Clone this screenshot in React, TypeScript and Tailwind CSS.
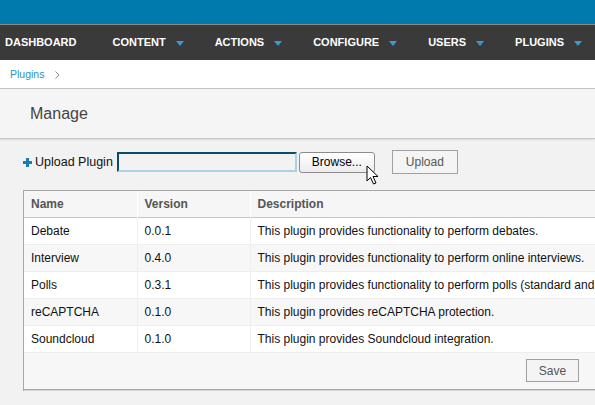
import React from "react";

const navItems = [
  { label: "DASHBOARD", caret: false },
  { label: "CONTENT", caret: true },
  { label: "ACTIONS", caret: true },
  { label: "CONFIGURE", caret: true },
  { label: "USERS", caret: true },
  { label: "PLUGINS", caret: true },
];

const plugins = [
  { name: "Debate", version: "0.0.1", description: "This plugin provides functionality to perform debates." },
  { name: "Interview", version: "0.4.0", description: "This plugin provides functionality to perform online interviews." },
  { name: "Polls", version: "0.3.1", description: "This plugin provides functionality to perform polls (standard and advanced)." },
  { name: "reCAPTCHA", version: "0.1.0", description: "This plugin provides reCAPTCHA protection." },
  { name: "Soundcloud", version: "0.1.0", description: "This plugin provides Soundcloud integration." },
];

function Caret() {
  return (
    <svg width="8" height="5" viewBox="0 0 8 5" className="ml-[10px] mt-[1px]">
      <path d="M0 0 L8 0 L4 5 Z" fill="#3a9ad3" />
    </svg>
  );
}

function Cursor() {
  return (
    <svg
      width="14"
      height="21"
      viewBox="0 0 14 21"
      className="absolute left-[366px] top-[165px]"
    >
      <path
        d="M1 1 L1 16 L4.5 12.5 L7.5 19 L10 18 L7 11.5 L12 11.5 Z"
        fill="#fff"
        stroke="#000"
        strokeWidth="1"
        strokeLinejoin="round"
      />
    </svg>
  );
}

export default function App() {
  return (
    <div
      className="relative w-[595px] h-[405px] overflow-hidden bg-[#f2f2f2]"
      style={{ fontFamily: '"Liberation Sans", Arial, sans-serif' }}
    >
      <div className="h-[24px] bg-[#0079ad]" />
      <div className="h-[1px] bg-[#8a8a8a]" />
      <nav className="h-[35px] bg-[#3a3a3a] flex items-center pl-[5px] text-[11px] font-bold text-white">
        {navItems.map((item, i) => (
          <div
            key={item.label}
            className={`flex items-center ${i === 0 ? "mr-[36px]" : "mr-[31px]"}`}
          >
            <span>{item.label}</span>
            {item.caret && <Caret />}
          </div>
        ))}
      </nav>
      <div className="h-[29px] bg-white flex items-center pl-[10px] text-[10.5px] border-b border-[#c4c4c4] shadow-[0_1px_2px_rgba(0,0,0,0.12)]">
        <span className="text-[#2f8fc6] mt-[1px]">Plugins</span>
        <svg width="5" height="8" viewBox="0 0 5 8" className="ml-[11px] mt-[2px]">
          <path d="M0.5 0.5 L4 4 L0.5 7.5" fill="none" stroke="#8a8a8a" strokeWidth="1" />
        </svg>
      </div>
      <div className="h-[50px] bg-[#f5f5f5] flex items-center pl-[30px] border-b border-[#c8c8c8] shadow-[0_1px_2px_rgba(0,0,0,0.1)]">
        <h1 className="text-[16px] text-[#444] mt-[1px]">Manage</h1>
      </div>

      <div className="flex items-center h-[24px] mt-[11px] pl-[23px] text-[12.5px] text-[#111]">
        <svg width="9" height="9" viewBox="0 0 9 9">
          <path d="M3 0 H6 V3 H9 V6 H6 V9 H3 V6 H0 V3 H3 Z" fill="#1a7db0" />
        </svg>
        <span className="ml-[3px]">Upload Plugin</span>
        <div className="ml-[4px] w-[180px] h-[20px] border-2 border-t-[#0b4a68] border-l-[#0b4a68] border-b-[#a9d2e7] border-r-[#a9d2e7]" />
        <button className="ml-[2px] w-[76px] h-[21px] rounded-[3px] border border-[#8c8c8c] bg-gradient-to-b from-white to-[#ececec] text-[12px] text-black">
          Browse...
        </button>
        <button className="ml-[17px] w-[66px] h-[24px] border border-[#a0a0a0] bg-[#f4f4f4] text-[12px] text-[#555]">
          Upload
        </button>
      </div>

      <div className="ml-[23px] mt-[16px] w-[700px] border-l border-t border-[#a8a8a8] bg-[#f7f7f7]">
        <table className="w-full border-collapse text-[12px] text-[#111]">
          <thead>
            <tr className="h-[26px] bg-[#f6f6f6] border-b border-[#c4c4c4]">
              <th className="w-[113px] text-left font-bold text-[#555] pl-[7px] border-r border-white">Name</th>
              <th className="w-[113px] text-left font-bold text-[#555] pl-[7px] border-r border-white">Version</th>
              <th className="text-left font-bold text-[#555] pl-[7px]">Description</th>
            </tr>
          </thead>
          <tbody>
            {plugins.map((p, i) => (
              <tr
                key={p.name}
                className={`h-[27px] border-b border-[#eeeeee] ${i % 2 === 0 ? "bg-white" : "bg-[#f7f7f7]"}`}
              >
                <td className="pl-[7px] border-r border-[#eeeeee] whitespace-nowrap">{p.name}</td>
                <td className="pl-[7px] border-r border-[#eeeeee] whitespace-nowrap">{p.version}</td>
                <td className="pl-[7px] whitespace-nowrap">{p.description}</td>
              </tr>
            ))}
          </tbody>
        </table>
        <div className="h-[36px] flex items-center pl-[502px]">
          <button className="w-[53px] h-[23px] border border-[#a0a0a0] bg-[#f4f4f4] text-[12px] text-[#555]">
            Save
          </button>
        </div>
        <div className="h-[1px] bg-[#a8a8a8]" />
        <div className="h-[1px] bg-[#d6d6d6]" />
      </div>

      <Cursor />
    </div>
  );
}
